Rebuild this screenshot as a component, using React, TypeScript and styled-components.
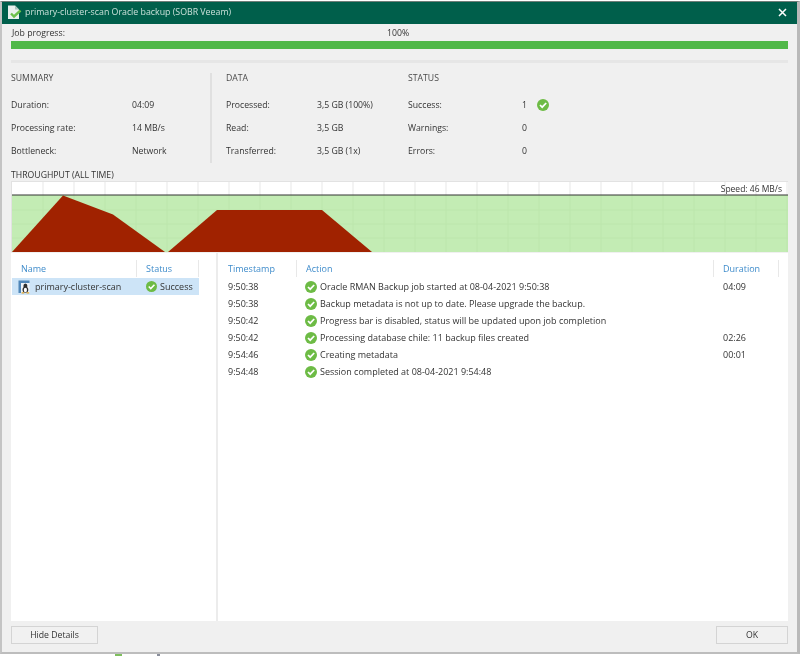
import React from 'react';
import styled, { createGlobalStyle } from 'styled-components';

const GlobalStyle = createGlobalStyle`
	html, body {
		margin: 0;
		padding: 0;
		background: #ffffff;
	}
	body {
		font-family: 'Open Sans', 'Noto Sans', sans-serif;
		font-size: 9px;
		color: #333333;
	}
`;

const Page = styled.div`
	position: relative;
	width: 800px;
	height: 656px;
	padding: 1px 0 2px 0;
	box-sizing: border-box;
	overflow: hidden;
	background: #ffffff;
`;

const Window = styled.div`
	height: 100%;
	display: flex;
	flex-direction: column;
	box-sizing: border-box;
	background: #f0f0f0;
	border-left: 2px solid #c4c4c4;
	border-right: 3px solid #b9b9b9;
	border-bottom: 2px solid #bdbdbd;
	border-top: 1px solid #6f7d78;
	filter: blur(0.45px);
`;

const TitleBar = styled.div`
	height: 22px;
	flex: none;
	display: flex;
	align-items: center;
	padding: 0 10px 2px 5px;
	box-sizing: border-box;
	gap: 3px;
	background: #005f4b;
	color: #c9e0d9;
	font-size: 8.8px;
`;

const TitleText = styled.span`
	flex: 1;
`;

const Body = styled.div`
	flex: 1;
	display: flex;
	flex-direction: column;
	padding: 0 9px 8px 9px;
	min-height: 0;
`;

const ProgressHead = styled.div`
	position: relative;
	height: 17px;
	line-height: 18px;
	padding-left: 1px;
	font-size: 8.7px;
`;

const Percent = styled.span`
	position: absolute;
	left: 376px;
	top: 0;
`;

const ProgressBar = styled.div`
	height: 8px;
	background: #50b848;
`;

const Divider = styled.div`
	height: 3px;
	margin-top: 11px;
	background: #e6e6e6;
`;

const Stats = styled.div`
	display: flex;
	margin-top: 10px;
	height: 90px;
	font-size: 8.7px;
`;

const StatColumn = styled.div<{ $width: number; $rule?: boolean; $pad?: number }>`
	width: ${({ $width }) => $width}px;
	flex: none;
	box-sizing: border-box;
	padding-left: ${({ $pad }) => $pad ?? 0}px;
	border-right: ${({ $rule }) => ($rule ? '2px solid #e0e0e0' : 'none')};
`;

const StatHeading = styled.div`
	height: 11px;
	line-height: 11px;
	margin-bottom: 9px;
	color: #4a4a4a;
`;

const StatRow = styled.div<{ $label: number }>`
	display: grid;
	grid-template-columns: ${({ $label }) => $label}px auto 1fr;
	align-items: center;
	height: 23px;
`;

const IconGap = styled.span`
	display: flex;
	padding-left: 10px;
`;

const ThroughputLabel = styled.div`
	height: 11px;
	line-height: 11px;
	margin-top: 7px;
	font-size: 8.7px;
`;

const Chart = styled.div`
	position: relative;
	height: 71px;
	flex: none;
	border: 1px solid #e2e2e2;
	border-bottom: none;
	box-sizing: border-box;
	background: #ffffff;
`;

const ChartSvg = styled.svg`
	display: block;
`;

const Speed = styled.span`
	position: absolute;
	right: 5px;
	top: 1px;
	font-size: 8.5px;
	line-height: 11px;
`;

const Lists = styled.div`
	flex: 1;
	display: flex;
	min-height: 0;
	margin-top: 1px;
	background: #ffffff;
`;

const LeftPane = styled.div`
	width: 207px;
	flex: none;
	padding-left: 1px;
	box-sizing: border-box;
	border-right: 2px solid #ececec;
`;

const RightPane = styled.div`
	flex: 1;
	padding-left: 1px;
`;

const HeadRow = styled.div<{ $columns: string }>`
	display: grid;
	grid-template-columns: ${({ $columns }) => $columns};
	height: 17px;
	margin-top: 7px;
	margin-bottom: 1px;
`;

const HeadCell = styled.div<{ $rule?: boolean }>`
	padding-left: 9px;
	line-height: 17px;
	color: #3f8ccb;
	border-right: ${({ $rule }) => ($rule ? '1px solid #e8e8e8' : 'none')};
`;

const DataRow = styled.div<{ $columns: string; $selected?: boolean }>`
	display: grid;
	grid-template-columns: ${({ $columns }) => $columns};
	align-items: center;
	height: 17px;
	width: ${({ $selected }) => ($selected ? '187px' : 'auto')};
	background: ${({ $selected }) => ($selected ? '#cde4f7' : 'transparent')};
`;

const Cell = styled.div`
	display: flex;
	align-items: center;
	gap: 3px;
	padding-left: 9px;
	white-space: nowrap;
`;

const NameCell = styled(Cell)`
	padding-left: 6px;
	gap: 4px;
`;

const ActionCell = styled(Cell)`
	padding-left: 8px;
`;

const Footer = styled.div`
	flex: none;
	display: flex;
	justify-content: space-between;
	padding-top: 5px;
`;

const Button = styled.div<{ $width: number }>`
	width: ${({ $width }) => $width}px;
	height: 18px;
	box-sizing: border-box;
	border: 1px solid #d4d4d4;
	background: #f1f1f1;
	text-align: center;
	line-height: 16px;
	font-size: 8.7px;
`;

// bits of the window behind the dialog, showing under its bottom edge
const BehindMark = styled.span<{ $left: number; $width: number; $color: string }>`
	position: absolute;
	bottom: 0;
	left: ${({ $left }) => $left}px;
	width: ${({ $width }) => $width}px;
	height: 2px;
	background: ${({ $color }) => $color};
`;

const Check: React.FC<{ size?: number }> = ({ size = 12 }) => (
	<svg width={size} height={size} viewBox="0 0 12 12" style={{ flex: 'none' }}>
		<circle cx="6" cy="6" r="6" fill="#6dbb45" />
		<path d="M3 6 L5.2 8.2 L9.2 4" fill="none" stroke="#ffffff" strokeWidth="1.7" />
	</svg>
);

const TitleIcon: React.FC = () => (
	<svg width="15" height="15" viewBox="0 0 15 15" style={{ flex: 'none' }}>
		<path d="M1 0.5 H8 L12 4.5 V14 H1 Z" fill="#e9f0ed" />
		<path d="M8 0.5 V4.5 H12" fill="#a9c4bb" />
		<path d="M4 8.5 L7 11.5 L13.5 5.5" fill="none" stroke="#6cc04a" strokeWidth="2.4" />
	</svg>
);

const CloseIcon: React.FC = () => (
	<svg width="9" height="9" viewBox="0 0 9 9">
		<path d="M1 1 L8 8 M8 1 L1 8" stroke="#ffffff" strokeWidth="1.5" />
	</svg>
);

const ServerIcon: React.FC = () => (
	<svg width="13" height="14" viewBox="0 0 13 14" style={{ flex: 'none' }}>
		<path d="M0.5 0.5 H11.5 V3 H3 V13 H0.5 Z" fill="#4f86b8" />
		<path d="M3 3 H11.5 V13 H3 Z" fill="#eef3f8" />
		<ellipse cx="7.4" cy="6" rx="2" ry="2.6" fill="#2e2e2e" />
		<ellipse cx="7.4" cy="9.8" rx="2.9" ry="3" fill="#2e2e2e" />
		<ellipse cx="7.4" cy="10" rx="1.6" ry="2.2" fill="#ffffff" />
		<path d="M3.6 12.8 H6.2 M8.6 12.8 H11.2" stroke="#e2a42a" strokeWidth="1.2" />
	</svg>
);

const gridX = Array.from({ length: 25 }, (_, i) => 31 + i * 31);
const gridY = [28, 42, 56];

const ThroughputChart: React.FC = () => (
	<ChartSvg width="776" height="70" viewBox="0 0 776 70">
		<rect x="0" y="0" width="776" height="70" fill="#ffffff" />
		<rect x="0" y="13" width="776" height="57" fill="#c3ecb4" />
		{gridX.map((x) => (
			<line key={x} x1={x} x2={x} y1="0" y2="13" stroke="#efefef" strokeWidth="1.5" />
		))}
		{gridX.map((x) => (
			<line key={x} x1={x} x2={x} y1="13" y2="70" stroke="#bce6ac" strokeWidth="1" />
		))}
		{gridY.map((y) => (
			<line key={y} x1="0" x2="776" y1={y} y2={y} stroke="#bce6ac" strokeWidth="1" />
		))}
		<line x1="0" x2="776" y1="13" y2="13" stroke="#333333" strokeWidth="1" />
		<path d="M0 70 L51 13.5 L101 32.5 L153 70 Z" fill="#a02200" />
		<path d="M156 70 L205 28 L310 28 L360 70 Z" fill="#a02200" />
	</ChartSvg>
);

const summary = [
	['Duration:', '04:09'],
	['Processing rate:', '14 MB/s'],
	['Bottleneck:', 'Network'],
];
const data = [
	['Processed:', '3,5 GB (100%)'],
	['Read:', '3,5 GB'],
	['Transferred:', '3,5 GB (1x)'],
];
const status = [
	['Success:', '1'],
	['Warnings:', '0'],
	['Errors:', '0'],
];
const logRows = [
	['9:50:38', 'Oracle RMAN Backup job started at 08-04-2021 9:50:38', '04:09'],
	['9:50:38', 'Backup metadata is not up to date. Please upgrade the backup.', ''],
	['9:50:42', 'Progress bar is disabled, status will be updated upon job completion', ''],
	['9:50:42', 'Processing database chile: 11 backup files created', '02:26'],
	['9:54:46', 'Creating metadata', '00:01'],
	['9:54:48', 'Session completed at 08-04-2021 9:54:48', ''],
];

const leftColumns = '125px 62px';
const rightColumns = '78px 417px 65px 1fr';

const App: React.FC = () => (
	<>
		<GlobalStyle />
		<Page>
			<Window>
				<TitleBar>
					<TitleIcon />
					<TitleText>primary-cluster-scan Oracle backup (SOBR Veeam)</TitleText>
					<CloseIcon />
				</TitleBar>
				<Body>
					<ProgressHead>
						Job progress:
						<Percent>100%</Percent>
					</ProgressHead>
					<ProgressBar />
					<Divider />
					<Stats>
						<StatColumn $width={201} $rule>
							<StatHeading>SUMMARY</StatHeading>
							{summary.map(([label, value]) => (
								<StatRow key={label} $label={121}>
									<span>{label}</span>
									<span>{value}</span>
								</StatRow>
							))}
						</StatColumn>
						<StatColumn $width={196} $pad={14}>
							<StatHeading>DATA</StatHeading>
							{data.map(([label, value]) => (
								<StatRow key={label} $label={91}>
									<span>{label}</span>
									<span>{value}</span>
								</StatRow>
							))}
						</StatColumn>
						<StatColumn $width={300}>
							<StatHeading>STATUS</StatHeading>
							{status.map(([label, value], i) => (
								<StatRow key={label} $label={114}>
									<span>{label}</span>
									<span>{value}</span>
									{i === 0 ? (
										<IconGap>
											<Check />
										</IconGap>
									) : (
										<span />
									)}
								</StatRow>
							))}
						</StatColumn>
					</Stats>
					<ThroughputLabel>THROUGHPUT (ALL TIME)</ThroughputLabel>
					<Chart>
						<ThroughputChart />
						<Speed>Speed: 46 MB/s</Speed>
					</Chart>
					<Lists>
						<LeftPane>
							<HeadRow $columns={leftColumns}>
								<HeadCell $rule>Name</HeadCell>
								<HeadCell $rule>Status</HeadCell>
							</HeadRow>
							<DataRow $columns={leftColumns} $selected>
								<NameCell>
									<ServerIcon />
									primary-cluster-scan
								</NameCell>
								<Cell>
									<Check size={11} />
									Success
								</Cell>
							</DataRow>
						</LeftPane>
						<RightPane>
							<HeadRow $columns={rightColumns}>
								<HeadCell $rule>Timestamp</HeadCell>
								<HeadCell $rule>Action</HeadCell>
								<HeadCell $rule>Duration</HeadCell>
							</HeadRow>
							{logRows.map(([time, action, duration], i) => (
								<DataRow key={i} $columns={rightColumns}>
									<Cell>{time}</Cell>
									<ActionCell>
										<Check />
										{action}
									</ActionCell>
									<Cell>{duration}</Cell>
								</DataRow>
							))}
						</RightPane>
					</Lists>
					<Footer>
						<Button $width={87}>Hide Details</Button>
						<Button $width={72}>OK</Button>
					</Footer>
				</Body>
			</Window>
			<BehindMark $left={115} $width={7} $color="#7fbf5e" />
			<BehindMark $left={157} $width={3} $color="#8a8f9c" />
		</Page>
	</>
);

export default App;
